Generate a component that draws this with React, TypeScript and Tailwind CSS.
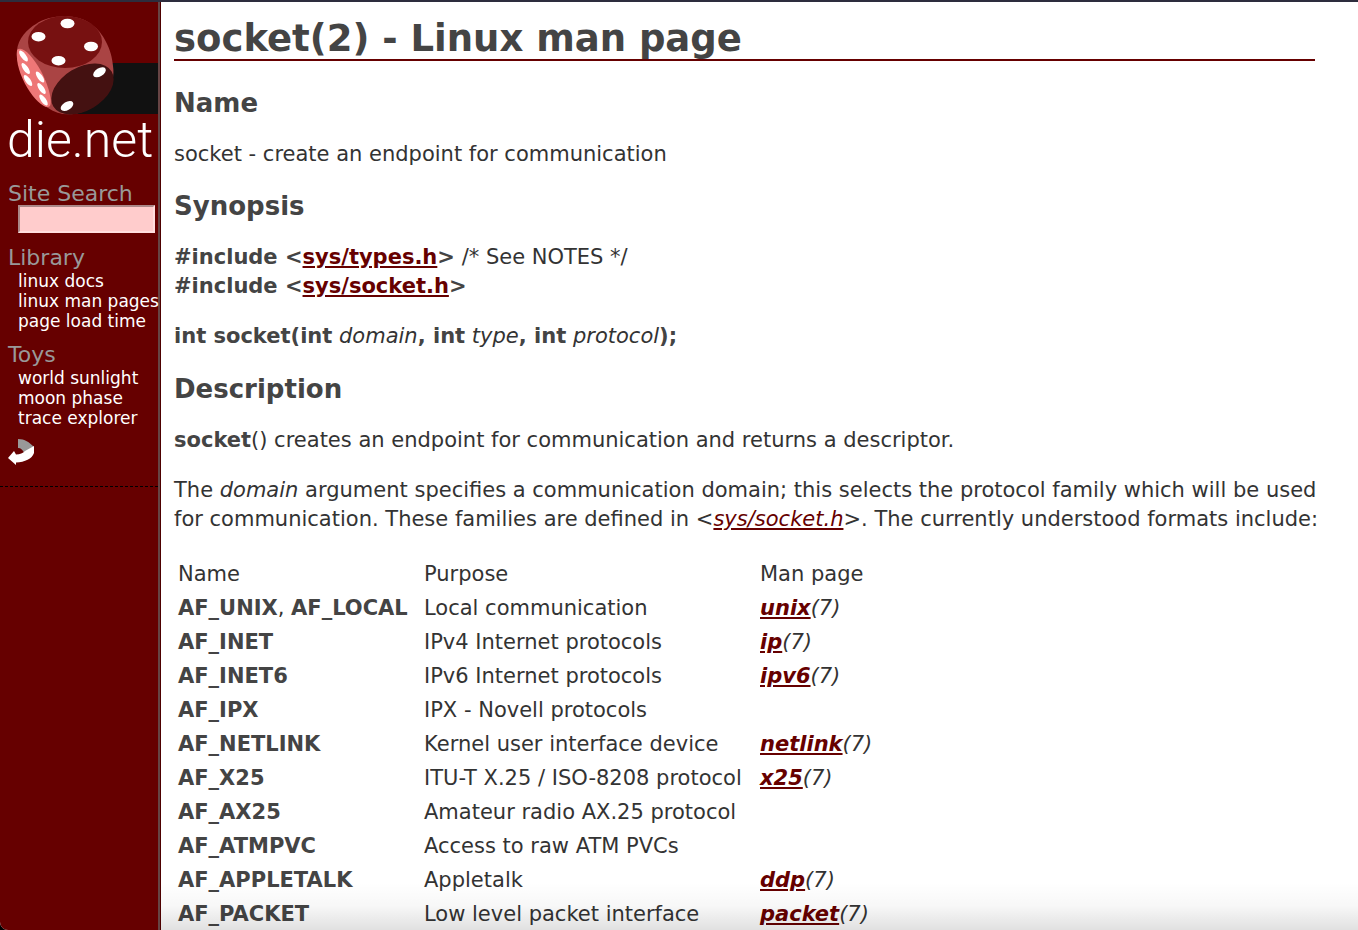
import React from 'react';

interface Family {
  names: string[];
  purpose: string;
  page?: string;
}

const families: Family[] = [
  { names: ['AF_UNIX', 'AF_LOCAL'], purpose: 'Local communication', page: 'unix' },
  { names: ['AF_INET'], purpose: 'IPv4 Internet protocols', page: 'ip' },
  { names: ['AF_INET6'], purpose: 'IPv6 Internet protocols', page: 'ipv6' },
  { names: ['AF_IPX'], purpose: 'IPX - Novell protocols' },
  { names: ['AF_NETLINK'], purpose: 'Kernel user interface device', page: 'netlink' },
  { names: ['AF_X25'], purpose: 'ITU-T X.25 / ISO-8208 protocol', page: 'x25' },
  { names: ['AF_AX25'], purpose: 'Amateur radio AX.25 protocol' },
  { names: ['AF_ATMPVC'], purpose: 'Access to raw ATM PVCs' },
  { names: ['AF_APPLETALK'], purpose: 'Appletalk', page: 'ddp' },
  { names: ['AF_PACKET'], purpose: 'Low level packet interface', page: 'packet' },
];

const menus = [
  { title: 'Library', links: ['linux docs', 'linux man pages', 'page load time'] },
  { title: 'Toys', links: ['world sunlight', 'moon phase', 'trace explorer'] },
];

const Logo = () => (
  <a href="#" className="block h-[168px]" aria-label="die.net">
    <svg width="158" height="168" viewBox="0 2 158 168" className="block">
      <rect x="68" y="63" width="90" height="51" fill="#111" />
      {/* die body */}
      <path
        d="M17 50 C18 39 27 29 36 24 C48 15 78 12 92 25 C103 32 112 50 113 66 C116 85 104 104 82 112 C70 116 58 115 48 108 C30 98 15 66 17 50Z"
        fill="#a44"
      />
      <ellipse cx="65" cy="42" rx="37" ry="26" fill="#711" />
      <path d="M17 50 C22 45 32 55 41 71 C50 88 54 107 48 107 C38 108 14 75 17 50Z" fill="#e77" />
      <ellipse cx="82.500" cy="89" rx="34" ry="21.500" transform="rotate(-31 82.5 89)" fill="#411" />
      <g fill="#fff">
        <ellipse cx="67.500" cy="23.500" rx="7" ry="4.800" />
        <ellipse cx="38.500" cy="36.700" rx="7" ry="4.800" />
        <ellipse cx="91" cy="46.500" rx="7" ry="4.800" />
        <ellipse cx="58.500" cy="60.700" rx="7" ry="4.800" />
        <ellipse cx="99.500" cy="72.300" rx="7" ry="4" transform="rotate(-31 99.5 72.3)" />
        <ellipse cx="67" cy="106" rx="7" ry="4" transform="rotate(-31 67 106)" />
        <ellipse cx="23.500" cy="56" rx="6.500" ry="2.500" transform="rotate(53 23.5 56)" />
        <ellipse cx="25.700" cy="68.500" rx="6.500" ry="2.500" transform="rotate(55 25.7 68.5)" />
        <ellipse cx="28" cy="80.500" rx="6.500" ry="2.500" transform="rotate(55 28 80.5)" />
        <ellipse cx="40" cy="77" rx="6.500" ry="2.500" transform="rotate(55 40 77)" />
        <ellipse cx="41.500" cy="88.500" rx="6.500" ry="2.500" transform="rotate(55 41.5 88.5)" />
        <ellipse cx="43.500" cy="100" rx="6.500" ry="2.500" transform="rotate(55 43.5 100)" />
      </g>
      <text x="7" y="157" fill="#fff" className="font-['Roboto'] text-[50px] font-light">
        die.net
      </text>
    </svg>
  </a>
);

const BackArrow = () => (
  <svg width="26" height="26" viewBox="0 0 26 26" className="block">
    <path d="M10 0 C17 0 21 3 26 8 L16 14 C15 11 13 9 10 9Z" fill="#999" />
    <path d="M26 7 V14 C24 20 17 23 8 23.500 V26 L0 19 L6 12 L8 15.500 C12 15.500 15 14 17 12Z" fill="#fff" />
  </svg>
);

const Sidebar = () => (
  <aside className="w-[161px] shrink-0 border-r border-[#4d0000] bg-[#600] text-[22px] leading-[26px] text-[#999]">
    <div className="h-full border-r-2 border-[#644]">
      <nav className="border-b border-dashed border-black pb-[21px]">
        <Logo />
        <form className="pt-3 pl-2" onSubmit={(e) => e.preventDefault()}>
          <label htmlFor="search" className="block leading-[23px]">
            Site Search
          </label>
          <input
            id="search"
            type="text"
            className="ml-[10px] block h-7 w-[137px] border-2 border-t-[#a88] border-r-[#fdd] border-b-[#fdd] border-l-[#a88] bg-[#fcc] px-1 text-base text-black outline-none"
          />
        </form>
        {menus.map((menu) => (
          <div key={menu.title} className="mt-[11px] pl-2 first-of-type:mt-3">
            <h3>{menu.title}</h3>
            <ul className="pl-[10px] text-[17px] leading-5 whitespace-nowrap text-white">
              {menu.links.map((link) => (
                <li key={link}>
                  <a href="#">{link}</a>
                </li>
              ))}
            </ul>
          </div>
        ))}
        <a href="#" className="mt-[11px] ml-2 block w-[26px]" aria-label="Back">
          <BackArrow />
        </a>
      </nav>
    </div>
  </aside>
);

const Ref = ({ children }: { children: React.ReactNode }) => (
  <a href="#" className="text-[#600] underline decoration-2 underline-offset-2">
    {children}
  </a>
);

const Heading = ({ children }: { children: React.ReactNode }) => (
  <h2 className="text-[26px] leading-8 font-bold text-[#444]">{children}</h2>
);

const FamilyTable = () => (
  <table className="mt-[22px] border-separate border-spacing-[2px]">
    <thead>
      <tr>
        <th className="w-[244px] p-[2px] text-left leading-7 font-normal">Name</th>
        <th className="w-[334px] p-[2px] text-left leading-7 font-normal">Purpose</th>
        <th className="p-[2px] text-left leading-7 font-normal">Man page</th>
      </tr>
    </thead>
    <tbody className="whitespace-nowrap">
      {families.map(({ names, purpose, page }) => (
        <tr key={names[0]}>
          <td className="p-[2px] leading-7">
            {names.map((name, i) => (
              <React.Fragment key={name}>
                {i > 0 && ', '}
                <b className="text-[#444]">{name}</b>
              </React.Fragment>
            ))}
          </td>
          <td className="p-[2px] leading-7">{purpose}</td>
          <td className="p-[2px] leading-7 italic">
            {page && (
              <>
                <b>
                  <Ref>{page}</Ref>
                </b>
                (7)
              </>
            )}
          </td>
        </tr>
      ))}
    </tbody>
  </table>
);

const ManPage = () => (
  <main className="min-w-0 flex-1 pt-4 pr-[43px] pl-[13px] text-[21px] leading-[29px] text-[#333]">
    <h1 className="border-b-2 border-[#600] text-[37px] leading-[41px] font-bold text-[#444]">
      socket(2) - Linux man page
    </h1>
    <section className="mt-[26px]">
      <Heading>Name</Heading>
      <p className="mt-[21px]">socket - create an endpoint for communication</p>
    </section>
    <section className="mt-[21px]">
      <Heading>Synopsis</Heading>
      <p className="mt-[21px]">
        <b className="text-[#444]">
          #include &lt;<Ref>sys/types.h</Ref>&gt;
        </b>{' '}
        /* See NOTES */
        <br />
        <b className="text-[#444]">
          #include &lt;<Ref>sys/socket.h</Ref>&gt;
        </b>
      </p>
      <p className="mt-[21px]">
        <b className="text-[#444]">int socket(int</b> <i>domain</i>
        <b className="text-[#444]">, int</b> <i>type</i>
        <b className="text-[#444]">, int</b> <i>protocol</i>
        <b className="text-[#444]">);</b>
      </p>
    </section>
    <section className="mt-[22px]">
      <Heading>Description</Heading>
      <p className="mt-[21px]">
        <b className="text-[#444]">socket</b>() creates an endpoint for communication and returns a descriptor.
      </p>
      <p className="mt-[21px] xl:whitespace-nowrap">
        The <i>domain</i> argument specifies a communication domain; this selects the protocol family which will be used{' '}
        <br className="hidden xl:inline" />
        for communication. These families are defined in &lt;
        <i>
          <Ref>sys/socket.h</Ref>
        </i>
        &gt;. The currently understood formats include:
      </p>
      <FamilyTable />
    </section>
  </main>
);

export default function App() {
  return (
    <div className="flex h-screen flex-col overflow-hidden bg-black font-['DejaVu_Sans',Verdana,sans-serif]">
      <div className="h-[2px] shrink-0 bg-[#2d2d3d]" />
      <div className="relative flex min-h-0 flex-1 overflow-hidden rounded-bl-lg bg-white">
        <Sidebar />
        <ManPage />
        <div className="pointer-events-none absolute right-0 bottom-0 left-[161px] h-12 bg-linear-to-b from-transparent via-black/3 to-black/12" />
      </div>
    </div>
  );
}
